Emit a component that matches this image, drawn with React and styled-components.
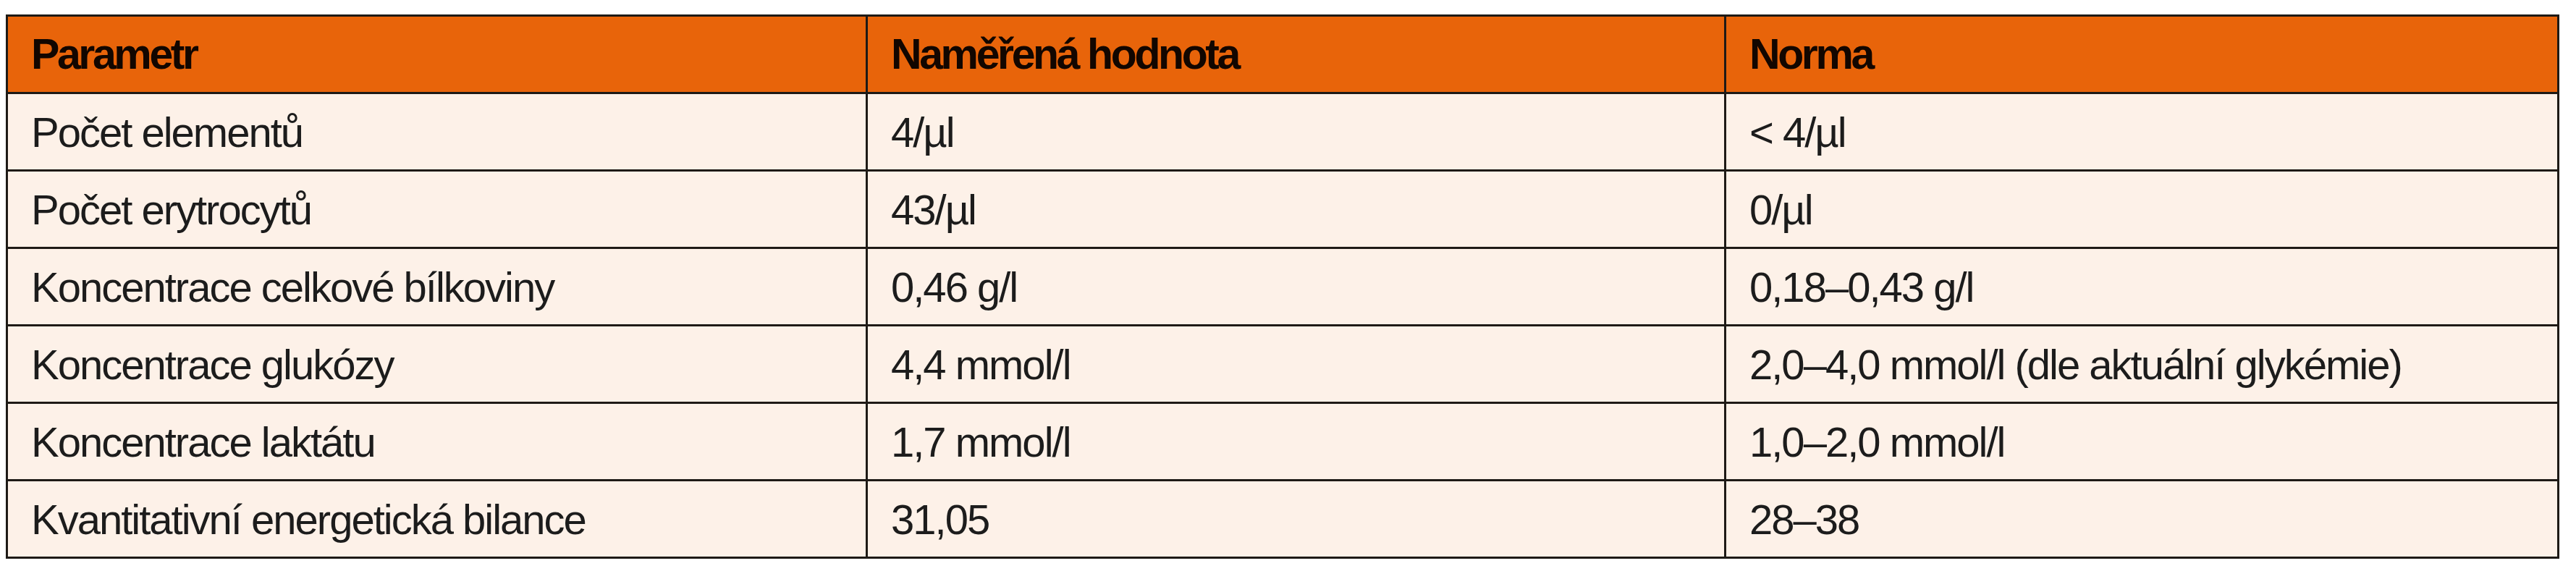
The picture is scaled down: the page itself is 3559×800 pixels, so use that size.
import React from "react";
import styled, { createGlobalStyle } from "styled-components";

const GlobalStyle = createGlobalStyle`
  html, body {
    margin: 0;
    padding: 0;
    background: #ffffff;
  }
`;

const Page = styled.div`
  padding: 20px 0 0 8px;
`;

const Table = styled.div`
  display: grid;
  grid-template-columns: 1185px 1186px 1151px;
  width: 3528px;
  box-sizing: border-box;
  border: 3px solid #1e1a16;
  background-color: #fdf1e8;
  font-family: "Liberation Sans Narrow", "Liberation Sans", Arial, sans-serif;
`;

const Cell = styled.div`
  display: flex;
  align-items: center;
  box-sizing: border-box;
  height: ${(p) => (p.$head ? "104px" : "107px")};
  padding-left: 32px;
  border-left: ${(p) => (p.$first ? "none" : "3px solid #1e1a16")};
  border-top: ${(p) => (p.$head ? "none" : "3px solid #1e1a16")};
  background-color: ${(p) => (p.$head ? "#e8640a" : "transparent")};
  color: ${(p) => (p.$head ? "#120600" : "#1c1c1c")};
  font-size: ${(p) => (p.$head ? "59px" : "58px")};
  font-weight: ${(p) => (p.$head ? 700 : 400)};
  letter-spacing: ${(p) => (p.$head ? "-3.4px" : "-2px")};
  white-space: nowrap;
`;

const head = ["Parametr", "Naměřená hodnota", "Norma"];

const rows = [
  ["Počet elementů", "4/µl", "< 4/µl"],
  ["Počet erytrocytů", "43/µl", "0/µl"],
  ["Koncentrace celkové bílkoviny", "0,46 g/l", "0,18–0,43 g/l"],
  ["Koncentrace glukózy", "4,4 mmol/l", "2,0–4,0 mmol/l (dle aktuální glykémie)"],
  ["Koncentrace laktátu", "1,7 mmol/l", "1,0–2,0 mmol/l"],
  ["Kvantitativní energetická bilance", "31,05", "28–38"],
];

const App = () => {
  return (
    <Page>
      <GlobalStyle />
      <Table>
        {head.map((h, i) => (
          <Cell key={h} $head $first={i === 0}>
            {h}
          </Cell>
        ))}
        {rows.map((row, r) =>
          row.map((c, i) => (
            <Cell key={r + "-" + i} $first={i === 0}>
              {c}
            </Cell>
          ))
        )}
      </Table>
    </Page>
  );
};

export default App;
